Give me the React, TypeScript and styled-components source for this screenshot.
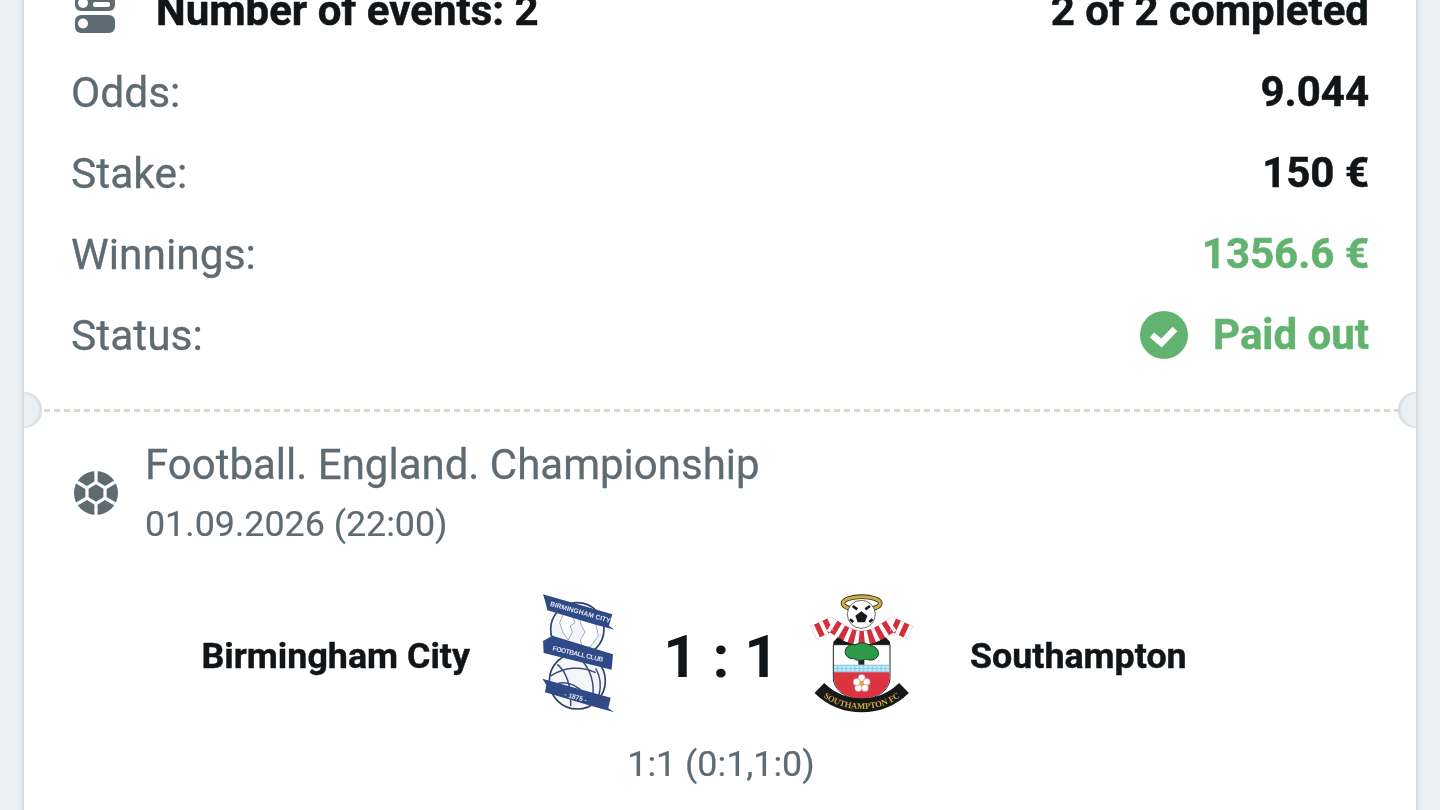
import * as React from "react";
import styled, { createGlobalStyle } from "styled-components";

const colors = {
  page: "#eaf0f3",
  muted: "#5f6b73",
  ink: "#111517",
  green: "#62b36f",
  dash: "#d9d9cc",
  navy: "#2f4a86",
};

const GlobalStyle = createGlobalStyle`
  html, body {
    margin: 0;
    height: 810px;
    overflow: hidden;
    background: ${colors.page};
    font-family: Roboto, "Liberation Sans", sans-serif;
  }
`;

const Page = styled.div`
  height: 810px;
  overflow: hidden;
  padding: 0 24px;
  box-sizing: border-box;
  filter: blur(0.4px);
`;

const Ticket = styled.div`
  margin-top: -30px;
  background: #fff;
  box-shadow: 0 0 5px rgba(70, 85, 100, 0.3);
`;

const Summary = styled.section`
  display: flex;
  flex-direction: column;
  padding: 0 47px 34px 48px;
`;

const Row = styled.div`
  height: 81px;
  display: flex;
  align-items: center;
  justify-content: space-between;
`;

const Label = styled.span`
  font-size: 42.5px;
  padding-top: 2px;
  margin-left: -1px;
  color: ${colors.muted};
  -webkit-text-stroke: 0.3px ${colors.muted};
`;

const Value = styled.span<{ $green?: boolean }>`
  font-size: 42px;
  font-weight: 700;
  color: ${(p) => (p.$green ? colors.green : colors.ink)};
  -webkit-text-stroke: 0.5px ${(p) => (p.$green ? colors.green : colors.ink)};
`;

const HeaderLeft = styled.div`
  display: flex;
  align-items: center;
  gap: 41px;
  padding-left: 3px;
  font-size: 42px;
  font-weight: 700;
  color: ${colors.ink};
  -webkit-text-stroke: 0.5px ${colors.ink};
`;

const StatusValue = styled(Value)`
  display: flex;
  align-items: center;
  gap: 25px;
`;

const Divider = styled.div`
  position: relative;
  height: 3px;
  background: repeating-linear-gradient(
    to right,
    ${colors.dash} 0,
    ${colors.dash} 6px,
    transparent 6px,
    transparent 10px
  );
`;

const Notch = styled.span<{ $side: "left" | "right" }>`
  position: absolute;
  top: -17px;
  ${(p) => p.$side}: 0;
  width: 18px;
  height: 36px;
  background: ${colors.page};
  border-radius: ${(p) => (p.$side === "left" ? "0 18px 18px 0" : "18px 0 0 18px")};
  box-shadow: inset ${(p) => (p.$side === "left" ? "-2px" : "2px")} 0 3px rgba(70, 85, 100, 0.16);
`;

const Event = styled.section`
  padding: 26px 48px 60px 50px;
`;

const EventHead = styled.div`
  display: flex;
  align-items: center;
  gap: 27px;
`;

const EventTitle = styled.div`
  font-size: 42px;
  line-height: 54px;
  color: ${colors.muted};
  -webkit-text-stroke: 0.3px ${colors.muted};
`;

const EventDate = styled.div`
  font-size: 35.8px;
  line-height: 54px;
  margin-top: 5px;
  color: ${colors.muted};
  -webkit-text-stroke: 0.2px ${colors.muted};
`;

const BallSvg = styled.svg`
  flex: none;
  margin-bottom: 4px;
`;

const Match = styled.div`
  margin: 30px -48px 0 -50px;
  display: grid;
  grid-template-columns: 1fr 117px 166px 117px 1fr;
  align-items: center;
  height: 150px;
`;

const TeamName = styled.div<{ $home?: boolean }>`
  font-size: 35.8px;
  font-weight: 700;
  color: ${colors.ink};
  -webkit-text-stroke: 0.4px ${colors.ink};
  text-align: ${(p) => (p.$home ? "right" : "left")};
  padding: ${(p) => (p.$home ? "0 50px 0 0" : "0 0 0 50px")};
`;

const Score = styled.div`
  font-size: 60px;
  font-weight: 700;
  text-align: center;
  padding-left: 2px;
  color: ${colors.ink};
`;

const Periods = styled.div`
  margin-top: 12px;
  text-align: center;
  font-size: 35.8px;
  color: ${colors.muted};
  -webkit-text-stroke: 0.2px ${colors.muted};
`;

const SlotsIcon = () => (
  <svg width="40" height="44" viewBox="0 -11 40 44">
    <rect x="0" y="-11" width="40" height="22" rx="6" fill={colors.muted} />
    <circle cx="8" cy="3" r="5" fill="#fff" />
    <rect x="18" y="2" width="17" height="5" rx="2" fill="#fff" />
    <rect x="18" y="-6" width="17" height="5" rx="2" fill="#fff" />
    <rect x="0" y="15" width="40" height="18" rx="6" fill={colors.muted} />
    <circle cx="8" cy="23.5" r="5" fill="#fff" />
  </svg>
);

const CheckIcon = () => (
  <svg width="48" height="48" viewBox="0 0 48 48">
    <circle cx="24" cy="24" r="24" fill={colors.green} />
    <path d="M12 24l9.5 8L35 18" fill="none" stroke="#fff" strokeWidth="6.5" />
  </svg>
);

const BallIcon = () => (
  <BallSvg width="44" height="44" viewBox="0 0 44 44">
    <circle cx="22" cy="22" r="22" fill={colors.muted} />
    <g stroke="#fff" strokeWidth="3.2" fill={colors.muted}>
      <polygon points="22,11.5 31,17 31,27 22,32.5 13,27 13,17" />
      <path d="M22 11.5V0M31 17l11-6.5M31 27l11 6.5M22 32.5V44M13 27L2 33.5M13 17L2 10.5" />
    </g>
  </BallSvg>
);

const ribbonText = {
  fontFamily: "Liberation Sans",
  fontWeight: 700,
  fill: "#e4e8f1",
};

const BirminghamCrest = () => (
  <svg width="117" height="150" viewBox="-27 0 351 450">
    <circle cx="145" cy="145" r="80" fill="#f5f6f9" stroke="#2f3f6c" strokeWidth="5" />
    <path
      d="M105 95l25 12 8 18-14 10 6 18-12 24-16-22-10-30zM150 105l30 8 22 22 6 30-24 32-22 6-8-26 14-24-12-22z"
      fill="#fff"
      stroke="#76809a"
      strokeWidth="2"
    />
    <circle cx="145" cy="300" r="84" fill="#f5f6f9" stroke="#2f3f6c" strokeWidth="5" />
    <path
      d="M65 285c40-26 90-32 135-10M85 250c30 25 42 68 40 125M150 230c32 30 50 70 40 130M62 320c30-22 76-26 118 36M200 262c14 24 18 50 10 80"
      fill="none"
      stroke="#3d4c78"
      strokeWidth="4.5"
    />
    <polygon points="42,40 250,100 240,134 256,146 190,128 55,88 50,66" fill={colors.navy} />
    <text x="62" y="74" transform="rotate(16 62 74)" fontSize="20" textLength="188" {...ribbonText}>
      BIRMINGHAM CITY
    </text>
    <polygon points="42,180 70,164 252,220 248,266 44,216" fill={colors.navy} />
    <text x="70" y="208" transform="rotate(13 70 208)" fontSize="20" textLength="155" {...ribbonText}>
      FOOTBALL CLUB
    </text>
    <polygon points="40,293 245,350 238,382 256,394 190,376 48,334 52,312" fill={colors.navy} />
    <text x="105" y="346" transform="rotate(15 105 346)" fontSize="20" {...ribbonText}>
      - 1875 -
    </text>
  </svg>
);

const SouthamptonCrest = () => (
  <svg width="117" height="150" viewBox="9 -15 351 450">
    <ellipse cx="185" cy="52" rx="56" ry="20" fill="none" stroke="#2d2a18" strokeWidth="14" />
    <ellipse cx="185" cy="52" rx="56" ry="20" fill="none" stroke="#d0ad45" strokeWidth="9" />
    <circle cx="184" cy="85" r="42" fill="#fff" stroke="#222" strokeWidth="2" />
    <polygon points="184,76 202,89 195,109 173,109 166,89" fill="#17191c" />
    <path d="M158 60l14 10M210 60l-14 10M150 100l10 8M218 100l-10 8" stroke="#17191c" strokeWidth="8" />
    <polygon points="100,168 125,140 185,178 245,140 270,168 270,184 100,184" fill="#17181a" />
    <path
      d="M40 140L92 116C120 134 150 156 185 156C220 156 250 134 278 116L330 140"
      fill="none"
      stroke="#d22f3b"
      strokeWidth="42"
    />
    <path
      d="M40 140L92 116C120 134 150 156 185 156C220 156 250 134 278 116L330 140"
      fill="none"
      stroke="#fff"
      strokeWidth="42"
      strokeDasharray="12 16"
    />
    <path d="M100 176H270V275C270 312 230 340 185 340C140 340 100 312 100 275Z" fill="#fff" stroke="#222" strokeWidth="3" />
    <path d="M102 258H268V275C268 312 230 338 185 338C140 338 102 312 102 275Z" fill="#dc3340" />
    <rect x="102" y="236" width="166" height="23" fill="#8ed0ea" />
    <path d="M102 243H268M102 252H268" stroke="#fff" strokeWidth="3" strokeDasharray="9 4" />
    <rect x="175" y="205" width="18" height="31" fill="#222" />
    <path
      d="M138 207c-10-20 12-36 28-30 12-10 34-8 42 2 18-2 32 16 26 30-6 14-26 16-36 10-12 6-30 6-38-2-8 2-18-2-22-10z"
      fill="#2e9a48"
      stroke="#143d20"
      strokeWidth="3"
    />
    <g fill="#fff" stroke="#c8404a" strokeWidth="1.5">
      <circle cx="185" cy="276" r="11" />
      <circle cx="200" cy="288" r="11" />
      <circle cx="195" cy="306" r="11" />
      <circle cx="175" cy="306" r="11" />
      <circle cx="170" cy="288" r="11" />
    </g>
    <circle cx="185" cy="293" r="7" fill="#d9b23c" />
    <path d="M58 306C95 342 140 358 185 358C230 358 275 342 312 306" fill="none" stroke="#17181a" strokeWidth="42" />
    <path id="southamptonArc" d="M50 316C95 358 140 369 185 369C230 369 275 358 320 316" fill="none" />
    <text fontFamily="Liberation Serif" fontWeight="700" fontSize="26" fill="#cdaa3f" textAnchor="middle">
      <textPath href="#southamptonArc" startOffset="50%">SOUTHAMPTON FC</textPath>
    </text>
  </svg>
);

export default function App() {
  return (
    <Page>
      <GlobalStyle />
      <Ticket>
        <Summary>
          <Row>
            <HeaderLeft>
              <SlotsIcon />
              Number of events: 2
            </HeaderLeft>
            <Value>2 of 2 completed</Value>
          </Row>
          <Row>
            <Label>Odds:</Label>
            <Value>9.044</Value>
          </Row>
          <Row>
            <Label>Stake:</Label>
            <Value>150 €</Value>
          </Row>
          <Row>
            <Label>Winnings:</Label>
            <Value $green>1356.6 €</Value>
          </Row>
          <Row>
            <Label>Status:</Label>
            <StatusValue $green>
              <CheckIcon />
              Paid out
            </StatusValue>
          </Row>
        </Summary>
        <Divider>
          <Notch $side="left" />
          <Notch $side="right" />
        </Divider>
        <Event>
          <EventHead>
            <BallIcon />
            <div>
              <EventTitle>Football. England. Championship</EventTitle>
              <EventDate>01.09.2026 (22:00)</EventDate>
            </div>
          </EventHead>
          <Match>
            <TeamName $home>Birmingham City</TeamName>
            <BirminghamCrest />
            <Score>1 : 1</Score>
            <SouthamptonCrest />
            <TeamName>Southampton</TeamName>
          </Match>
          <Periods>1:1 (0:1,1:0)</Periods>
        </Event>
      </Ticket>
    </Page>
  );
}
